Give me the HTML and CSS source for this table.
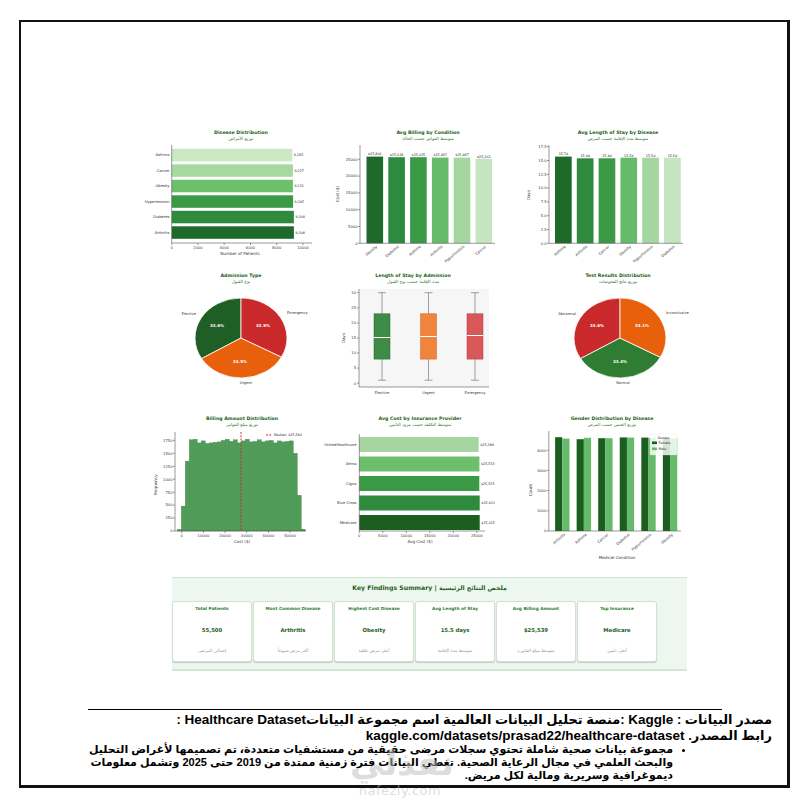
FILE: index.html
```html
<!DOCTYPE html>
<html lang="ar">
<head>
<meta charset="utf-8">
<title>Healthcare Dashboard</title>
<link rel="stylesheet" href="styles.css">
</head>
<body>
<div class="frame">
  <div class="dash">
    <div class="grid">
      <!-- Disease Distribution -->
      <svg class="chart" width="180" height="143" viewBox="0 0 180 143">
        <text class="t" x="101" y="9">Disease Distribution</text>
        <text class="st" x="101" y="15">توزيع الأمراض</text>
        <rect x="31.7" y="23.8" width="120.6" height="12.5" fill="#c9e8c3"/>
        <rect x="31.7" y="39.3" width="121.2" height="12.5" fill="#a5d99f"/>
        <rect x="31.7" y="54.8" width="121.2" height="12.5" fill="#6dbf6b"/>
        <rect x="31.7" y="70.3" width="121.4" height="12.5" fill="#3a9a46"/>
        <rect x="31.7" y="85.8" width="122.2" height="12.5" fill="#2e8a3c"/>
        <rect x="31.7" y="101.3" width="122.2" height="12.5" fill="#1e6a2b"/>
        <text class="e" x="29.5" y="31.4">Asthma</text>
        <text class="e" x="29.5" y="46.9">Cancer</text>
        <text class="e" x="29.5" y="62.4">Obesity</text>
        <text class="e" x="29.5" y="77.9">Hypertension</text>
        <text class="e" x="29.5" y="93.4">Diabetes</text>
        <text class="e" x="29.5" y="108.9">Arthritis</text>
        <text class="vl" x="153.8" y="31.2">9,185</text>
        <text class="vl" x="154.4" y="46.7">9,227</text>
        <text class="vl" x="154.4" y="62.2">9,231</text>
        <text class="vl" x="154.6" y="77.7">9,245</text>
        <text class="vl" x="155.4" y="93.2">9,304</text>
        <text class="vl" x="155.4" y="108.7">9,308</text>
        <path class="ax" d="M31.7 20V118H172"/>
        <path class="ax" d="M31.7 118v2M58 118v2M84.2 118v2M110.5 118v2M136.7 118v2M163 118v2"/>
        <text class="m" x="31.7" y="124">0</text>
        <text class="m" x="58" y="124">2000</text>
        <text class="m" x="84.2" y="124">4000</text>
        <text class="m" x="110.5" y="124">6000</text>
        <text class="m" x="136.7" y="124">8000</text>
        <text class="m" x="163" y="124">10000</text>
        <text class="lb m" x="100" y="130">Number of Patients</text>
      </svg>

      <!-- Avg Billing by Condition -->
      <svg class="chart" width="190" height="143" viewBox="0 0 190 143">
        <text class="t" x="108" y="9">Avg Billing by Condition</text>
        <text class="st" x="108" y="15">متوسط الفواتير حسب الحالة</text>
        <rect x="46.5" y="31.6" width="16.6" height="86.7" fill="#1e6a2b"/>
        <rect x="68.3" y="32.2" width="16.6" height="86.1" fill="#2e8a3c"/>
        <rect x="90.1" y="32.2" width="16.6" height="86.1" fill="#3a9a46"/>
        <rect x="111.9" y="32.6" width="16.6" height="85.7" fill="#66bb6a"/>
        <rect x="133.7" y="32.6" width="16.6" height="85.7" fill="#a5d6a0"/>
        <rect x="155.5" y="33.8" width="16.6" height="84.5" fill="#c5e5c0"/>
        <text class="vl m" x="54.8" y="30.4">$25,806</text>
        <text class="vl m" x="76.6" y="31">$25,638</text>
        <text class="vl m" x="98.4" y="31">$25,635</text>
        <text class="vl m" x="120.2" y="31.4">$25,497</text>
        <text class="vl m" x="142" y="31.4">$25,497</text>
        <text class="vl m" x="163.8" y="32.6">$25,162</text>
        <path class="ax" d="M40 20V118.3H175"/>
        <path class="ax" d="M38 118.3h2M38 101.5h2M38 84.7h2M38 67.9h2M38 51.1h2M38 34.3h2"/>
        <text class="e" x="37.5" y="119.6">0</text>
        <text class="e" x="37.5" y="102.8">5000</text>
        <text class="e" x="37.5" y="86">10000</text>
        <text class="e" x="37.5" y="69.2">15000</text>
        <text class="e" x="37.5" y="52.4">20000</text>
        <text class="e" x="37.5" y="35.6">25000</text>
        <text class="lb m" transform="translate(19 69) rotate(-90)">Cost ($)</text>
        <text class="e" transform="translate(57.5 122) rotate(-40)">Obesity</text>
        <text class="e" transform="translate(79.3 122) rotate(-40)">Diabetes</text>
        <text class="e" transform="translate(101.1 122) rotate(-40)">Asthma</text>
        <text class="e" transform="translate(122.9 122) rotate(-40)">Arthritis</text>
        <text class="e" transform="translate(144.7 122) rotate(-40)">Hypertension</text>
        <text class="e" transform="translate(166.5 122) rotate(-40)">Cancer</text>
      </svg>

      <!-- Avg Length of Stay by Disease -->
      <svg class="chart" width="190" height="143" viewBox="0 0 190 143">
        <text class="t" x="108" y="9">Avg Length of Stay by Disease</text>
        <text class="st" x="108" y="15">متوسط مدة الإقامة حسب المرض</text>
        <rect x="45" y="31.6" width="16.7" height="86.7" fill="#1e6a2b"/>
        <rect x="66.8" y="33.3" width="16.7" height="85" fill="#2e8a3c"/>
        <rect x="88.6" y="33.3" width="16.7" height="85" fill="#3a9a46"/>
        <rect x="110.4" y="32.7" width="16.7" height="85.6" fill="#66bb6a"/>
        <rect x="132.2" y="32.7" width="16.7" height="85.6" fill="#a5d6a0"/>
        <rect x="154" y="32.7" width="16.7" height="85.6" fill="#c5e5c0"/>
        <text class="vl m" x="53.35" y="30.4">15.7d</text>
        <text class="vl m" x="75.15" y="32.1">15.4d</text>
        <text class="vl m" x="96.95" y="32.1">15.4d</text>
        <text class="vl m" x="118.75" y="31.5">15.5d</text>
        <text class="vl m" x="140.55" y="31.5">15.5d</text>
        <text class="vl m" x="162.35" y="31.5">15.5d</text>
        <path class="ax" d="M39 20V118.3H173"/>
        <path class="ax" d="M37 118.3h2M37 104.5h2M37 90.7h2M37 76.9h2M37 63.1h2M37 49.3h2M37 35.5h2M37 21.7h2"/>
        <text class="e" x="36.5" y="119.6">0.0</text>
        <text class="e" x="36.5" y="105.8">2.5</text>
        <text class="e" x="36.5" y="92">5.0</text>
        <text class="e" x="36.5" y="78.2">7.5</text>
        <text class="e" x="36.5" y="64.4">10.0</text>
        <text class="e" x="36.5" y="50.6">12.5</text>
        <text class="e" x="36.5" y="36.8">15.0</text>
        <text class="e" x="36.5" y="23">17.5</text>
        <text class="lb m" transform="translate(20 70) rotate(-90)">Days</text>
        <text class="e" transform="translate(56 122) rotate(-40)">Asthma</text>
        <text class="e" transform="translate(77.8 122) rotate(-40)">Arthritis</text>
        <text class="e" transform="translate(99.6 122) rotate(-40)">Cancer</text>
        <text class="e" transform="translate(121.4 122) rotate(-40)">Obesity</text>
        <text class="e" transform="translate(143.2 122) rotate(-40)">Hypertension</text>
        <text class="e" transform="translate(165 122) rotate(-40)">Diabetes</text>
      </svg>

      <!-- Admission Type pie -->
      <svg class="chart" width="180" height="137" viewBox="0 0 180 137">
        <text class="t" x="101" y="9">Admission Type</text>
        <text class="st" x="101" y="14.5">نوع القبول</text>
        <g class="pie">
          <path d="M101 70L101 30A46 40 0 0 0 61.57 90.6Z" fill="#1f5f25"/>
          <path d="M101 70L61.57 90.6A46 40 0 0 0 141.46 89.02Z" fill="#e8600c"/>
          <path d="M101 70L141.46 89.02A46 40 0 0 0 101 30Z" fill="#c9292b"/>
        </g>
        <text class="pl" x="77" y="59">33.6%</text>
        <text class="pl" x="123" y="59">32.9%</text>
        <text class="pl" x="100" y="95">33.5%</text>
        <text class="e" x="56" y="47">Elective</text>
        <text x="147" y="46">Emergency</text>
        <text class="m" x="106" y="116">Urgent</text>
      </svg>

      <!-- Length of stay box plot -->
      <svg class="chart" width="190" height="137" viewBox="0 0 190 137">
        <text class="t" x="93" y="9">Length of Stay by Admission</text>
        <text class="st" x="93" y="14.5">مدة الإقامة حسب نوع القبول</text>
        <rect x="39" y="21" width="130" height="98" fill="#f6f6f6"/>
        <path class="ax" d="M39 21V119H169"/>
        <path class="ax" d="M37 115.2h2M37 100.1h2M37 85h2M37 70h2M37 54.9h2M37 39.8h2M37 24.7h2"/>
        <text class="e" x="36" y="116.5">0</text>
        <text class="e" x="36" y="101.4">5</text>
        <text class="e" x="36" y="86.3">10</text>
        <text class="e" x="36" y="71.3">15</text>
        <text class="e" x="36" y="56.2">20</text>
        <text class="e" x="36" y="41.1">25</text>
        <text class="e" x="36" y="26">30</text>
        <text class="lb m" transform="translate(25 70) rotate(-90)">Days</text>
        <g class="whisk">
          <path d="M62 24.7V45.8M62 91.1V112.2M58 24.7h8M58 112.2h8"/>
          <path d="M108.5 24.7V45.8M108.5 91.1V112.2M104.5 24.7h8M104.5 112.2h8"/>
          <path d="M155 24.7V45.8M155 91.1V112.2M151 24.7h8M151 112.2h8"/>
        </g>
        <rect x="54" y="45.8" width="16" height="45.3" fill="#3d8b47" stroke="#2a6a31" stroke-width="0.5"/>
        <rect x="100.5" y="45.8" width="16" height="45.3" fill="#f0843c" stroke="#c9621f" stroke-width="0.5"/>
        <rect x="147" y="45.8" width="16" height="45.3" fill="#d8585a" stroke="#b13a3c" stroke-width="0.5"/>
        <path class="med" d="M54 69.5h16M100.5 68.5h16M147 67.5h16"/>
        <text class="m" x="62" y="125.5">Elective</text>
        <text class="m" x="108.5" y="125.5">Urgent</text>
        <text class="m" x="155" y="125.5">Emergency</text>
      </svg>

      <!-- Test Results pie -->
      <svg class="chart" width="190" height="137" viewBox="0 0 190 137">
        <text class="t" x="108" y="9">Test Results Distribution</text>
        <text class="st" x="108" y="14.5">توزيع نتائج الفحوصات</text>
        <g class="pie">
          <path d="M110 70L110 30A46 40 0 0 0 70.57 90.6Z" fill="#c9292b"/>
          <path d="M110 70L70.57 90.6A46 40 0 0 0 150.31 89.27Z" fill="#2e7d32"/>
          <path d="M110 70L150.31 89.27A46 40 0 0 0 110 30Z" fill="#e8600c"/>
        </g>
        <text class="pl" x="87" y="59">33.6%</text>
        <text class="pl" x="132" y="59">33.1%</text>
        <text class="pl" x="110" y="95">33.4%</text>
        <text class="e" x="66" y="47">Abnormal</text>
        <text x="156" y="46">Inconclusive</text>
        <text class="m" x="113" y="116">Normal</text>
      </svg>

      <!-- Billing histogram -->
      <svg class="chart" width="180" height="155" viewBox="0 0 180 155">
        <text class="t" x="102" y="15">Billing Amount Distribution</text>
        <text class="st" x="102" y="21">توزيع مبلغ الفواتير</text>
        <g class="hist">
          <rect x="37.3" y="124.4" width="4" height="1.6"/>
          <rect x="41.3" y="101.1" width="4" height="24.9"/>
          <rect x="45.3" y="56.1" width="4" height="69.9"/>
          <rect x="49.3" y="34.8" width="4" height="91.2"/>
          <rect x="53.3" y="34.3" width="4" height="91.7"/>
          <rect x="57.3" y="37.9" width="4" height="88.1"/>
          <rect x="61.3" y="35.9" width="4" height="90.1"/>
          <rect x="65.3" y="38.5" width="4" height="87.5"/>
          <rect x="69.3" y="37.9" width="4" height="88.1"/>
          <rect x="73.3" y="37.4" width="4" height="88.6"/>
          <rect x="77.3" y="36.9" width="4" height="89.1"/>
          <rect x="81.3" y="35.4" width="4" height="90.6"/>
          <rect x="85.3" y="34.3" width="4" height="91.7"/>
          <rect x="89.3" y="36.4" width="4" height="89.6"/>
          <rect x="93.3" y="34.8" width="4" height="91.2"/>
          <rect x="97.3" y="37.9" width="4" height="88.1"/>
          <rect x="101.3" y="35.9" width="4" height="90.1"/>
          <rect x="105.3" y="34.3" width="4" height="91.7"/>
          <rect x="109.3" y="36.9" width="4" height="89.1"/>
          <rect x="113.3" y="36.4" width="4" height="89.6"/>
          <rect x="117.3" y="34.8" width="4" height="91.2"/>
          <rect x="121.3" y="36.9" width="4" height="89.1"/>
          <rect x="125.3" y="35.9" width="4" height="90.1"/>
          <rect x="129.3" y="35.4" width="4" height="90.6"/>
          <rect x="133.3" y="37.9" width="4" height="88.1"/>
          <rect x="137.3" y="35.9" width="4" height="90.1"/>
          <rect x="141.3" y="36.9" width="4" height="89.1"/>
          <rect x="145.3" y="36.4" width="4" height="89.6"/>
          <rect x="149.3" y="35.9" width="4" height="90.1"/>
          <rect x="153.3" y="48.3" width="4" height="77.7"/>
          <rect x="157.3" y="90.3" width="4" height="35.7"/>
          <rect x="161.3" y="124.2" width="4" height="1.8"/>
        </g>
        <path class="medl" d="M101 27V126"/>
        <path class="medl" d="M126 30h6"/>
        <text class="vl" x="134" y="31.2">Median: $25,540</text>
        <path class="ax" d="M35 27V126H166"/>
        <path class="ax" d="M33 126h2M33 113h2M33 100.1h2M33 87.2h2M33 74.2h2M33 61.3h2M33 48.3h2M33 35.4h2"/>
        <text class="e" x="32.5" y="127.3">0</text>
        <text class="e" x="32.5" y="114.3">250</text>
        <text class="e" x="32.5" y="101.4">500</text>
        <text class="e" x="32.5" y="88.5">750</text>
        <text class="e" x="32.5" y="75.5">1000</text>
        <text class="e" x="32.5" y="62.6">1250</text>
        <text class="e" x="32.5" y="49.6">1500</text>
        <text class="e" x="32.5" y="36.7">1750</text>
        <path class="ax" d="M41.7 126v2M63.4 126v2M85 126v2M106.7 126v2M128.4 126v2M150 126v2"/>
        <text class="m" x="41.7" y="132">0</text>
        <text class="m" x="63.4" y="132">10000</text>
        <text class="m" x="85" y="132">20000</text>
        <text class="m" x="106.7" y="132">30000</text>
        <text class="m" x="128.4" y="132">40000</text>
        <text class="m" x="150" y="132">50000</text>
        <text class="lb m" x="102" y="138">Cost ($)</text>
        <text class="lb m" transform="translate(17 80) rotate(-90)">Frequency</text>
      </svg>

      <!-- Avg cost by insurance -->
      <svg class="chart" width="190" height="155" viewBox="0 0 190 155">
        <text class="t" x="100" y="15">Avg Cost by Insurance Provider</text>
        <text class="st" x="100" y="21">متوسط التكلفة حسب مزود التأمين</text>
        <rect x="39.3" y="32" width="119.3" height="15" fill="#a5d6a0"/>
        <rect x="39.3" y="51.5" width="120.1" height="15" fill="#6dbf6b"/>
        <rect x="39.3" y="71" width="120" height="15" fill="#3a9a46"/>
        <rect x="39.3" y="90.5" width="120.4" height="15" fill="#2e8a3c"/>
        <rect x="39.3" y="110" width="120.4" height="15" fill="#1b5e20"/>
        <text class="e" x="36.5" y="40.8">UnitedHealthcare</text>
        <text class="e" x="36.5" y="60.3">Aetna</text>
        <text class="e" x="36.5" y="79.8">Cigna</text>
        <text class="e" x="36.5" y="99.3">Blue Cross</text>
        <text class="e" x="36.5" y="118.8">Medicare</text>
        <text class="vl" x="160.2" y="40.6">$25,389</text>
        <text class="vl" x="161" y="60.1">$25,553</text>
        <text class="vl" x="160.9" y="79.6">$25,525</text>
        <text class="vl" x="161.3" y="99.1">$25,613</text>
        <text class="vl" x="161.3" y="118.6">$25,615</text>
        <path class="ax" d="M39.3 29V126H165"/>
        <path class="ax" d="M39.3 126v2M62.8 126v2M86.3 126v2M109.8 126v2M133.3 126v2M156.8 126v2"/>
        <text class="m" x="39.3" y="132">0</text>
        <text class="m" x="62.8" y="132">5000</text>
        <text class="m" x="86.3" y="132">10000</text>
        <text class="m" x="109.8" y="132">15000</text>
        <text class="m" x="133.3" y="132">20000</text>
        <text class="m" x="156.8" y="132">25000</text>
        <text class="lb m" x="100" y="138">Avg Cost ($)</text>
      </svg>

      <!-- Gender distribution -->
      <svg class="chart" width="190" height="155" viewBox="0 0 190 155">
        <text class="t" x="102" y="15">Gender Distribution by Disease</text>
        <text class="st" x="102" y="21">توزيع الجنس حسب المرض</text>
        <g>
          <rect x="45.1" y="32.2" width="7.2" height="93.8" fill="#1b5e20"/>
          <rect x="52.3" y="33.6" width="7.2" height="92.4" fill="#66bb6a"/>
          <rect x="66.65" y="34.2" width="7.2" height="91.8" fill="#1b5e20"/>
          <rect x="73.85" y="32.8" width="7.2" height="93.2" fill="#66bb6a"/>
          <rect x="88.2" y="33.2" width="7.2" height="92.8" fill="#1b5e20"/>
          <rect x="95.4" y="33.2" width="7.2" height="92.8" fill="#66bb6a"/>
          <rect x="109.75" y="32.4" width="7.2" height="93.6" fill="#1b5e20"/>
          <rect x="116.95" y="32.6" width="7.2" height="93.4" fill="#66bb6a"/>
          <rect x="131.3" y="32.6" width="7.2" height="93.4" fill="#1b5e20"/>
          <rect x="138.5" y="33.2" width="7.2" height="92.8" fill="#66bb6a"/>
          <rect x="152.85" y="33.2" width="7.2" height="92.8" fill="#1b5e20"/>
          <rect x="160.05" y="33.6" width="7.2" height="92.4" fill="#66bb6a"/>
        </g>
        <rect class="legend" x="140" y="29" width="27" height="21" rx="1"/>
        <text class="vl m" x="153.5" y="33.5">Gender</text>
        <rect x="142" y="36.5" width="5" height="2.6" fill="#1b5e20"/>
        <text class="vl" x="148.5" y="39">Female</text>
        <rect x="142" y="42.5" width="5" height="2.6" fill="#66bb6a"/>
        <text class="vl" x="148.5" y="45">Male</text>
        <path class="ax" d="M38.8 26V126H171"/>
        <path class="ax" d="M36.8 126h2M36.8 105.8h2M36.8 85.6h2M36.8 65.4h2M36.8 45.2h2"/>
        <text class="e" x="36.3" y="127.3">0</text>
        <text class="e" x="36.3" y="107.1">1000</text>
        <text class="e" x="36.3" y="86.9">2000</text>
        <text class="e" x="36.3" y="66.7">3000</text>
        <text class="e" x="36.3" y="46.5">4000</text>
        <text class="lb m" transform="translate(22 85) rotate(-90)">Count</text>
        <text class="e" transform="translate(55.5 130) rotate(-40)">Arthritis</text>
        <text class="e" transform="translate(77 130) rotate(-40)">Asthma</text>
        <text class="e" transform="translate(98.6 130) rotate(-40)">Cancer</text>
        <text class="e" transform="translate(120.1 130) rotate(-40)">Diabetes</text>
        <text class="e" transform="translate(141.7 130) rotate(-40)">Hypertension</text>
        <text class="e" transform="translate(163.2 130) rotate(-40)">Obesity</text>
        <text class="lb m" x="107" y="154">Medical Condition</text>
      </svg>
    </div>

    <div class="summary">
      <div class="summary-title">Key Findings Summary | ملخص النتائج الرئيسية</div>
      <div class="cards">
        <div class="card"><div class="card-label">Total Patients</div><div class="card-value">55,500</div><div class="card-ar">إجمالي المرضى</div></div>
        <div class="card"><div class="card-label">Most Common Disease</div><div class="card-value">Arthritis</div><div class="card-ar">أكثر مرض شيوعاً</div></div>
        <div class="card"><div class="card-label">Highest Cost Disease</div><div class="card-value">Obesity</div><div class="card-ar">أعلى مرض تكلفة</div></div>
        <div class="card"><div class="card-label">Avg Length of Stay</div><div class="card-value">15.5 days</div><div class="card-ar">متوسط مدة الإقامة</div></div>
        <div class="card"><div class="card-label">Avg Billing Amount</div><div class="card-value">$25,539</div><div class="card-ar">متوسط مبلغ الفاتورة</div></div>
        <div class="card"><div class="card-label">Top Insurance</div><div class="card-value">Medicare</div><div class="card-ar">أعلى تأمين</div></div>
      </div>
    </div>
  </div>

  <div class="rule"></div>

  <div class="source" dir="rtl">
    <p class="src-line">مصدر البيانات : <b>Kaggle</b> :منصة تحليل البيانات العالمية اسم مجموعة البيانات<b>Healthcare Dataset</b> :</p>
    <p class="src-line">رابط المصدر. <b>kaggle.com/datasets/prasad22/healthcare-dataset</b></p>
    <ul class="src-list">
      <li>مجموعة بيانات صحية شاملة تحتوي سجلات مرضى حقيقية من مستشفيات متعددة، تم تصميمها لأغراض التحليل<br>والبحث العلمي في مجال الرعاية الصحية. تغطي البيانات فترة زمنية ممتدة من <b>2019</b> حتى <b>2025</b> وتشمل معلومات<br>ديموغرافية وسريرية ومالية لكل مريض.</li>
    </ul>
  </div>
</div>

<div class="watermark" aria-hidden="true">
  <div class="wm-logo">نفذلي</div>
  <div class="wm-url">nafezly.com</div>
</div>
</body>
</html>
```

FILE: styles.css
```css
html, body {
  margin: 0;
  padding: 0;
  background: #fff;
}

body {
  font-family: "Liberation Sans", "DejaVu Sans", sans-serif;
  color: #000;
}

.frame {
  box-sizing: border-box;
  margin: 20px 0 0 19px;
  width: 771px;
  height: 768px;
  border: 2px solid #111;
  border-right-width: 3px;
  border-bottom-width: 3px;
}

.dash {
  margin-left: 119px;
  padding-top: 103px;
  width: 560px;
}

.grid {
  display: grid;
  grid-template-columns: 180px 190px 190px;
  grid-template-rows: 143px 137px 155px;
}

.chart {
  display: block;
}

.chart text {
  font-family: "DejaVu Sans", sans-serif;
  font-size: 3.7px;
  fill: #333;
}

.chart .t {
  font-size: 4.7px;
  font-weight: bold;
  fill: #1b5e20;
  text-anchor: middle;
}

.chart .st {
  font-size: 4.3px;
  fill: #2e7d32;
  text-anchor: middle;
}

.chart .e { text-anchor: end; }
.chart .m { text-anchor: middle; }

.chart .vl {
  font-size: 3.3px;
  fill: #222;
}

.chart .lb {
  font-size: 4.1px;
  fill: #333;
}

.chart .pl {
  font-size: 4px;
  font-weight: bold;
  fill: #fff;
  text-anchor: middle;
}

.chart .ax {
  stroke: #555;
  stroke-width: 0.6;
  fill: none;
}

.chart .pie path {
  stroke: #fff;
  stroke-width: 0.8;
}

.chart .whisk path {
  stroke: #666;
  stroke-width: 0.6;
  fill: none;
}

.chart .med {
  stroke: #fff;
  stroke-width: 1.2;
}

.chart .hist rect {
  fill: #4f9d58;
  stroke: #2f7037;
  stroke-width: 0.3;
}

.chart .medl {
  stroke: #c0392b;
  stroke-width: 1;
  stroke-dasharray: 2 1.2;
  fill: none;
}

.chart .legend {
  fill: #fff;
  fill-opacity: 0.82;
  stroke: #ddd;
  stroke-width: 0.3;
}

/* summary */
.summary {
  box-sizing: border-box;
  margin: 17px 0 0 32px;
  width: 515px;
  height: 94px;
  background: #eef7ef;
  border-top: 1px solid #cfe5d0;
  border-bottom: 2px solid #d3e7d4;
}

.summary-title {
  height: 23px;
  line-height: 20px;
  text-align: center;
  font-family: "DejaVu Sans", sans-serif;
  font-size: 6.2px;
  font-weight: bold;
  color: #1b5e20;
}

.cards {
  display: flex;
  gap: 1px;
  height: 61px;
}

.card {
  box-sizing: border-box;
  width: 80px;
  background: #fff;
  border: 1px solid #cfe2cf;
  border-radius: 3px;
  box-shadow: 0 1px 1px rgba(0, 0, 0, 0.18);
  display: flex;
  flex-direction: column;
  align-items: center;
  font-family: "DejaVu Sans", sans-serif;
}

.card-label {
  margin-top: 4px;
  font-size: 4.3px;
  font-weight: bold;
  color: #2e7d32;
  line-height: 6px;
}

.card-value {
  margin-top: 15px;
  font-size: 5.3px;
  font-weight: bold;
  color: #1b5e20;
  line-height: 6px;
}

.card-ar {
  margin-top: 15px;
  font-size: 4.3px;
  color: #9a9a9a;
  line-height: 6px;
}

/* rule and source */
.rule {
  margin: 38px 0 0 67px;
  width: 634px;
  border-top: 1.5px solid #000;
}

.source {
  margin-top: 2px;
  padding-right: 15px;
  font-weight: bold;
}

.src-line {
  margin: 0;
  height: 15.5px;
  font-size: 13px;
  line-height: 15.5px;
  white-space: nowrap;
}

.src-line b {
  font-size: 13.5px;
  line-height: 15.5px;
}

.src-list {
  margin: 0;
  padding: 0 99px 0 0;
  font-size: 11px;
  line-height: 13px;
  white-space: nowrap;
}

.src-list li::marker {
  font-size: 9px;
}

.watermark {
  position: absolute;
  left: 350px;
  top: 742px;
  width: 100px;
  text-align: center;
  color: #bdbdbd;
  opacity: 0.5;
  pointer-events: none;
}

.wm-logo {
  font-family: "DejaVu Sans", sans-serif;
  font-weight: bold;
  font-size: 34px;
  line-height: 42px;
}

.wm-url {
  font-family: "DejaVu Sans", sans-serif;
  font-size: 13px;
  line-height: 14px;
  letter-spacing: 0.5px;
}
```
